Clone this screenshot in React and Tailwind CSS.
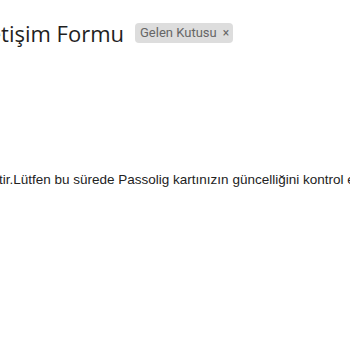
import React from 'react';

export default function App() {
  return (
    <div className="w-[350px] h-[350px] overflow-hidden bg-white">
      <div className="flex items-center whitespace-nowrap pt-[19px] ml-[-23px]">
        <h2
          className="text-[22px] leading-[28px] text-[#1f1f1f] font-normal"
          style={{ fontFamily: '"Open Sans", sans-serif' }}
        >
          İletişim Formu
        </h2>
        <span
          className="ml-[11px] flex items-center gap-[6px] rounded-[4px] bg-[#dddddd] pl-[5px] pr-[4px] h-[20px] text-[13px] text-[#666666]"
          style={{ fontFamily: 'Roboto, sans-serif' }}
        >
          Gelen Kutusu
          <span className="text-[12px] text-[#666666]">×</span>
        </span>
      </div>
      <div
        className="mt-[124px] ml-[-1px] whitespace-nowrap text-[13.5px] leading-[18px] text-[#222222]"
        style={{ fontFamily: 'Arial, "Liberation Sans", sans-serif' }}
      >
        tir.Lütfen bu sürede Passolig kartınızın güncelliğini kontrol ediniz.
      </div>
    </div>
  );
}
